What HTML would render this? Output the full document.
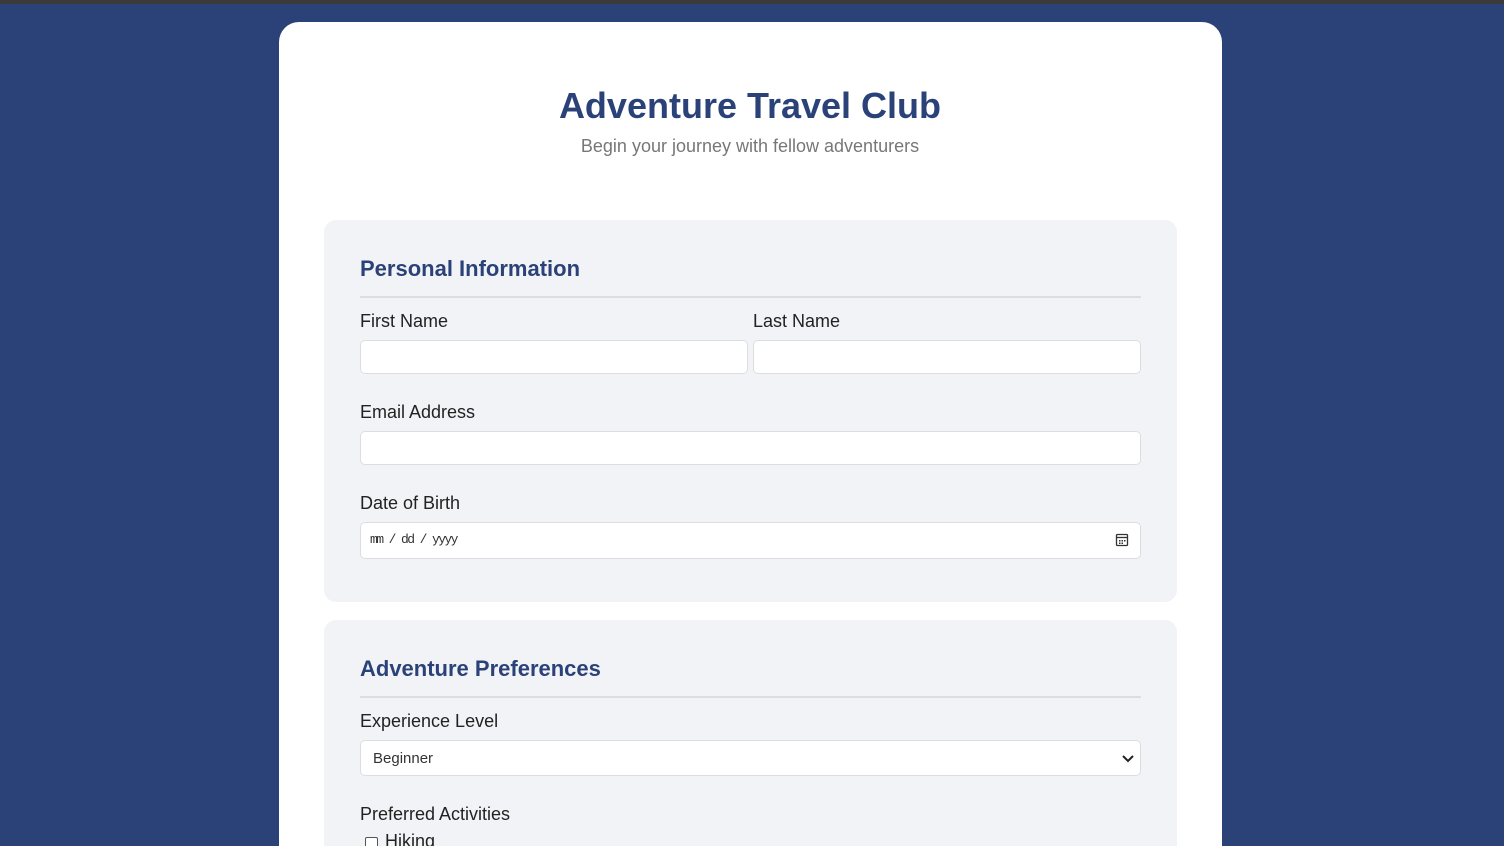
<!DOCTYPE html>
<html><head><meta charset="utf-8"><style>
*{box-sizing:border-box;margin:0;padding:0}
html,body{width:1504px;height:846px;overflow:hidden}
body{background:#2b4279;font-family:"Liberation Sans",Arial,sans-serif;position:relative}
.top{position:absolute;left:0;top:0;width:1504px;height:4px;background:#3a3a3a}
.card{position:absolute;left:279px;top:22px;width:943px;height:824px;background:#fff;border-radius:20px 20px 0 0}
h1{position:absolute;left:0;width:100%;top:85px;text-align:center;font-size:36px;color:#2b4279;font-weight:bold;margin-left:-2px}
.sub{position:absolute;left:0;width:100%;top:136px;text-align:center;font-size:18px;color:#777;margin-left:-2px}
.sec{position:absolute;left:324px;width:853px;background:#f2f3f6;border-radius:12px}
.h2{position:absolute;left:360px;font-size:22px;font-weight:bold;color:#2b4279}
.hr{position:absolute;left:360px;width:781px;height:2px;background:#dcdde0}
.lbl{position:absolute;font-size:18px;color:#222}
.in{position:absolute;background:#fff;border:1px solid #dcdde2;border-radius:5px}
</style></head><body>
<div class="top"></div>
<div class="card"></div>
<h1>Adventure Travel Club</h1>
<div class="sub">Begin your journey with fellow adventurers</div>

<div class="sec" style="top:220px;height:382px"></div>
<div class="h2" style="top:256px">Personal Information</div>
<div class="hr" style="top:296px"></div>
<div class="lbl" style="left:360px;top:311px">First Name</div>
<div class="lbl" style="left:753px;top:311px">Last Name</div>
<div class="in" style="left:360px;top:340px;width:388px;height:34px"></div>
<div class="in" style="left:753px;top:340px;width:388px;height:34px"></div>
<div class="lbl" style="left:360px;top:402px">Email Address</div>
<div class="in" style="left:360px;top:431px;width:781px;height:34px"></div>
<div class="lbl" style="left:360px;top:493px">Date of Birth</div>
<div class="in" style="left:360px;top:522px;width:781px;height:37px"></div>
<div style="position:absolute;left:370px;top:532px;font-family:'Liberation Mono',monospace;font-size:13px;color:#333;white-space:pre;letter-spacing:-1.6px">mm / dd / yyyy</div>
<svg style="position:absolute;left:1115px;top:533px" width="14" height="14" viewBox="0 0 14 14"><rect x="1.5" y="1.5" width="11" height="11" rx="1" fill="none" stroke="#333" stroke-width="1.3"/><line x1="1.5" y1="4.5" x2="12.5" y2="4.5" stroke="#333" stroke-width="1.3"/><rect x="4" y="7" width="1.5" height="1.5" fill="#333"/><rect x="6.5" y="7" width="1.5" height="1.5" fill="#333"/><rect x="9" y="7" width="1.5" height="1.5" fill="#333"/><rect x="4" y="9.5" width="1.5" height="1.5" fill="#333"/><rect x="6.5" y="9.5" width="1.5" height="1.5" fill="#333"/></svg>

<div class="sec" style="top:620px;height:226px;border-radius:12px 12px 0 0"></div>
<div class="h2" style="top:656px">Adventure Preferences</div>
<div class="hr" style="top:696px"></div>
<div class="lbl" style="left:360px;top:711px">Experience Level</div>
<div class="in" style="left:360px;top:740px;width:781px;height:36px"></div>
<div style="position:absolute;left:373px;top:750px;font-size:15px;color:#333">Beginner</div>
<svg style="position:absolute;left:1121px;top:753px" width="14" height="10" viewBox="0 0 14 10"><path d="M2 3 L7 8 L12 3" fill="none" stroke="#222" stroke-width="2"/></svg>
<div class="lbl" style="left:360px;top:804px">Preferred Activities</div>
<div style="position:absolute;left:365px;top:837px;width:13px;height:9px;border:1px solid #555;border-bottom:none;border-radius:2px 2px 0 0;background:#fff"></div>
<div class="lbl" style="left:385px;top:831px;height:15px;overflow:hidden">Hiking</div>
</body></html>
